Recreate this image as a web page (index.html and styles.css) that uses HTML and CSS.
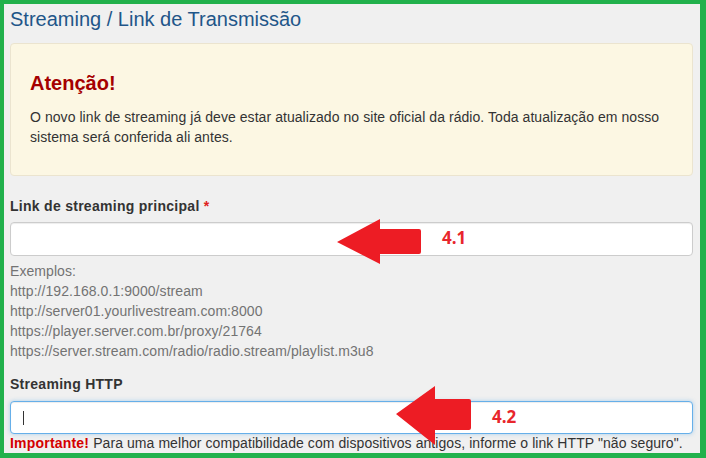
FILE: index.html
```html
<!DOCTYPE html>
<html lang="pt-BR">
<head>
<meta charset="utf-8">
<title>Streaming / Link de Transmissão</title>
<link rel="stylesheet" href="styles.css">
</head>
<body>
<div class="frame">
  <h2 class="page-title">Streaming / Link de Transmissão</h2>

  <div class="alert">
    <h4 class="alert-title">Atenção!</h4>
    <p class="alert-text">O novo link de streaming já deve estar atualizado no site oficial da rádio. Toda atualização em nosso sistema será conferida ali antes.</p>
  </div>

  <div class="form-group first">
    <label class="field-label" for="main">Link de streaming principal <span class="req">*</span></label>
    <input class="field" id="main" type="text">
    <div class="help">
      <div>Exemplos:</div>
      <div>http://192.168.0.1:9000/stream</div>
      <div>http://server01.yourlivestream.com:8000</div>
      <div>https://player.server.com.br/proxy/21764</div>
      <div>https://server.stream.com/radio/radio.stream/playlist.m3u8</div>
    </div>
  </div>

  <div class="form-group second">
    <label class="field-label" for="http">Streaming HTTP</label>
    <div class="field-wrap">
      <input class="field focus" id="http" type="text">
      <span class="caret"></span>
    </div>
    <div class="note"><strong class="imp">Importante!</strong> Para uma melhor compatibilidade com dispositivos antigos, informe o link HTTP "não seguro".</div>
  </div>

  <svg class="overlay" width="706" height="458" viewBox="0 0 706 458">
    <path d="M337 242 L380 219 L380 229 L419 229 Q421 229 421 231 L421 252 Q421 254 419 254 L380 254 L380 264 Z" fill="#ed1c24"/>
    <text x="442" y="244" class="num">4.1</text>
    <path d="M396 414 L435 386 L435 399 L469 399 Q471 399 471 401 L471 428 Q471 430 469 430 L435 430 L435 445 Z" fill="#ed1c24"/>
    <text x="492" y="423" class="num">4.2</text>
  </svg>
</div>
</body>
</html>
```

FILE: styles.css
```css
* { box-sizing: border-box; }
html, body { margin: 0; padding: 0; }
body {
  width: 706px;
  height: 458px;
  overflow: hidden;
  font-family: "Liberation Sans", Arial, sans-serif;
  font-size: 14px;
  line-height: 20px;
  color: #333333;
  background: #f0f0f0;
}
.frame {
  position: relative;
  width: 706px;
  height: 458px;
  border-style: solid;
  border-color: #22b14c;
  border-width: 4px 6px 5px 4px;
  padding: 4px 7px 0 6px;
  background: #f0f0f0;
  overflow: hidden;
}
.page-title {
  margin: 0;
  font-size: 20px;
  line-height: 22px;
  font-weight: normal;
  color: #1f5689;
}
.alert {
  margin-top: 13px;
  background: #fcf7e3;
  border: 1px solid #ebe4cf;
  border-radius: 4px;
  padding: 28px 19px 28px 19px;
}
.alert-title {
  margin: 0;
  font-size: 20px;
  line-height: 22px;
  font-weight: bold;
  color: #a50000;
}
.alert-text {
  margin: 13px 0 0 0;
  letter-spacing: 0.06px;
}
.form-group.first { margin-top: 20px; }
.form-group.second { margin-top: 13px; }
.field-label {
  display: block;
  font-weight: bold;
  margin-bottom: 6px;
  color: #333333;
  letter-spacing: 0.28px;
}
.req { color: #e02020; }
.field {
  display: block;
  width: 100%;
  height: 34px;
  margin: 0;
  padding: 6px 12px;
  font: inherit;
  color: #555;
  background: #ffffff;
  border: 1px solid #cccccc;
  border-radius: 4px;
  outline: none;
  box-shadow: inset 0 1px 1px rgba(0,0,0,0.075);
}
.field.focus {
  border-color: #66afe9;
  box-shadow: inset 0 1px 1px rgba(0,0,0,0.075), 0 0 4px rgba(102,175,233,0.5);
}
.help {
  margin-top: 5px;
  color: #737373;
  letter-spacing: 0.07px;
}
.field-wrap { position: relative; }
.second .field-label { margin-bottom: 7px; }
.second .field { height: 33px; }
.caret {
  position: absolute;
  left: 13px;
  top: 10px;
  width: 1px;
  height: 14px;
  background: #333;
}
.note {
  line-height: 16px;
  margin-top: 1px;
  color: #333333;
  letter-spacing: 0.07px;
}
.imp { color: #d40000; letter-spacing: 0.2px; }
.overlay {
  position: absolute;
  left: -4px;
  top: -4px;
  pointer-events: none;
}
.num {
  font-family: "Open Sans", sans-serif;
  font-weight: bold;
  font-size: 17px;
  fill: #e8262c;
}
```
